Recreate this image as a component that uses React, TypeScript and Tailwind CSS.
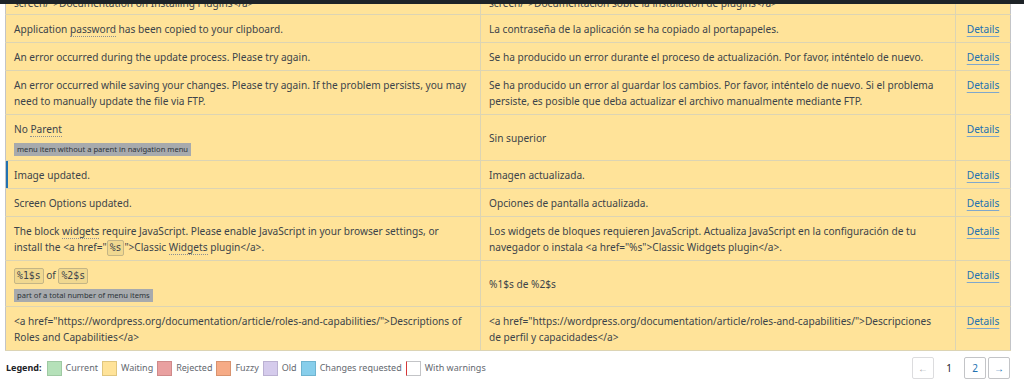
import React from "react";

const Gloss = ({ children }: { children: React.ReactNode }) => (
  <span className="border-b border-dotted border-[#8a8f94]">{children}</span>
);

const Ph = ({ children }: { children: React.ReactNode }) => (
  <span className="inline-block align-middle font-['DejaVu_Sans_Mono',monospace] text-[9.8px] leading-[14px] bg-[#f0d890] border border-[#c4b585] rounded-[2px] px-[2px] -my-[2px]">
    {children}
  </span>
);

const Ctx = ({ children }: { children: React.ReactNode }) => (
  <div className="mt-[5px] leading-[13px] h-[13px]">
    <span className="inline-block bg-[#a7aaad] text-[#2c3338] text-[7.6px] leading-[13px] px-[3px]">
      {children}
    </span>
  </div>
);

type Row = {
  orig: React.ReactNode;
  trans: React.ReactNode;
  ctx?: string;
  mid?: boolean;
  selected?: boolean;
  first?: boolean;
};

const rows: Row[] = [
  {
    first: true,
    orig: (
      <>
        Go to &lt;a href="https://wordpress.org/documentation/article/plugins-
        <br />
        screen/"&gt;Documentation on Installing Plugins&lt;/a&gt;
      </>
    ),
    trans: (
      <>
        Ir a &lt;a href="https://wordpress.org/documentation/article/plugins-
        <br />
        screen/"&gt;Documentación sobre la instalación de plugins&lt;/a&gt;
      </>
    ),
  },
  {
    orig: (
      <>
        Application <Gloss>password</Gloss> has been copied to your clipboard.
      </>
    ),
    trans: "La contraseña de la aplicación se ha copiado al portapapeles.",
  },
  {
    orig: "An error occurred during the update process. Please try again.",
    trans:
      "Se ha producido un error durante el proceso de actualización. Por favor, inténtelo de nuevo.",
  },
  {
    orig: (
      <>
        An error occurred while saving your changes. Please try again. If the problem persists, you may
        <br />
        need to manually update the file via FTP.
      </>
    ),
    trans: (
      <>
        Se ha producido un error al guardar los cambios. Por favor, inténtelo de nuevo. Si el problema
        <br />
        persiste, es posible que deba actualizar el archivo manualmente mediante FTP.
      </>
    ),
  },
  {
    orig: (
      <>
        No <Gloss>Parent</Gloss>
      </>
    ),
    ctx: "menu item without a parent in navigation menu",
    trans: "Sin superior",
    mid: true,
  },
  { orig: "Image updated.", trans: "Imagen actualizada.", selected: true },
  { orig: "Screen Options updated.", trans: "Opciones de pantalla actualizada." },
  {
    orig: (
      <>
        The block <Gloss>widgets</Gloss> require JavaScript. Please enable JavaScript in your browser settings, or
        <br />
        install the &lt;a href="<Ph>%s</Ph>"&gt;Classic <Gloss>Widgets</Gloss> plugin&lt;/a&gt;.
      </>
    ),
    trans: (
      <>
        Los widgets de bloques requieren JavaScript. Actualiza JavaScript en la configuración de tu
        <br />
        navegador o instala &lt;a href="%s"&gt;Classic Widgets plugin&lt;/a&gt;.
      </>
    ),
  },
  {
    orig: (
      <>
        <Ph>%1$s</Ph> of <Ph>%2$s</Ph>
      </>
    ),
    ctx: "part of a total number of menu items",
    trans: "%1$s de %2$s",
    mid: true,
  },
  {
    orig: (
      <>
        &lt;a href="https://wordpress.org/documentation/article/roles-and-capabilities/"&gt;Descriptions of
        <br />
        Roles and Capabilities&lt;/a&gt;
      </>
    ),
    trans: (
      <>
        &lt;a href="https://wordpress.org/documentation/article/roles-and-capabilities/"&gt;Descripciones
        <br />
        de perfil y capacidades&lt;/a&gt;
      </>
    ),
  },
];

const legend: { label: string; cls: string }[] = [
  { label: "Current", cls: "bg-[#b5e1b9] border-[#9fc9a3]" },
  { label: "Waiting", cls: "bg-[#ffe399] border-[#e0c67e]" },
  { label: "Rejected", cls: "bg-[#e9a0a0] border-[#cf8a8a]" },
  { label: "Fuzzy", cls: "bg-[#f6ab86] border-[#d8936f]" },
  { label: "Old", cls: "bg-[#d5cbec] border-[#bbb1d2]" },
  { label: "Changes requested", cls: "bg-[#87ceeb] border-[#6fb4d0]" },
  { label: "With warnings", cls: "bg-white border-[#c3c4c7] border-l-[#d63638]" },
];

export default function App() {
  return (
    <div className="relative w-[1024px] h-[387px] overflow-hidden bg-white font-['Noto_Sans',sans-serif] text-[#3c434a] text-[10.15px] leading-[16px]">
      <div className="absolute top-0 left-0 right-0 h-[4px] bg-[#1d2327] z-10" />
      <div className="-mt-[30px] pl-[5px] pr-[14px]">
        <table className="w-full border-collapse table-fixed border border-[#c3c4c7]">
          <colgroup>
            <col className="w-[475px]" />
            <col className="w-[475px]" />
            <col className="w-[55px]" />
          </colgroup>
          <tbody>
            {rows.map((r, i) => {
              const pad = r.first ? "pt-[8px] pb-[3px]" : "pt-[6px] pb-[5px]";
              return (
                <tr key={i} className="bg-[#ffe399] border-b border-[#dcd4b4]">
                  <td
                    className={`align-top whitespace-nowrap pl-[8px] pr-[4px] ${pad} border-r border-[#dcd4b4] ${
                      r.selected ? "shadow-[inset_2px_0_0_#2271b1]" : ""
                    }`}
                  >
                    <div className="leading-[16px]">{r.orig}</div>
                    {r.ctx && <Ctx>{r.ctx}</Ctx>}
                  </td>
                  <td
                    className={`${r.mid ? "align-middle" : "align-top"} whitespace-nowrap pl-[8px] pr-[4px] ${pad} border-r border-[#dcd4b4]`}
                  >
                    {r.trans}
                  </td>
                  <td className={`align-top text-center ${pad}`}>
                    {!r.first && (
                      <a className="text-[#2271b1] underline decoration-[#7fa7cc] underline-offset-[3px]">Details</a>
                    )}
                  </td>
                </tr>
              );
            })}
          </tbody>
        </table>
      </div>
      <div className="flex items-center justify-between pl-[6px] pr-[14px] mt-[6px]">
        <div className="flex items-center text-[#646970] text-[9px]">
          <span className="font-bold text-[#1d2327] mr-[5px]">Legend:</span>
          {legend.map((l) => (
            <div key={l.label} className="flex items-center mr-[4px]">
              <span className={`inline-block w-[15px] h-[15px] border ${l.cls} mr-[4px]`} />
              <span>{l.label}</span>
            </div>
          ))}
        </div>
        <div className="flex items-center gap-[2px] text-[10px]">
          <span className="w-[22px] h-[22px] flex items-center justify-center border border-[#dcdcde] rounded-[2px] text-[#a7aaad]">
            ←
          </span>
          <span className="w-[26px] h-[22px] flex items-center justify-center text-[#1d2327]">1</span>
          <span className="w-[22px] h-[22px] flex items-center justify-center border border-[#c3c4c7] rounded-[2px] text-[#2271b1]">
            2
          </span>
          <span className="w-[22px] h-[22px] flex items-center justify-center border border-[#c3c4c7] rounded-[2px] text-[#2271b1]">
            →
          </span>
        </div>
      </div>
    </div>
  );
}
